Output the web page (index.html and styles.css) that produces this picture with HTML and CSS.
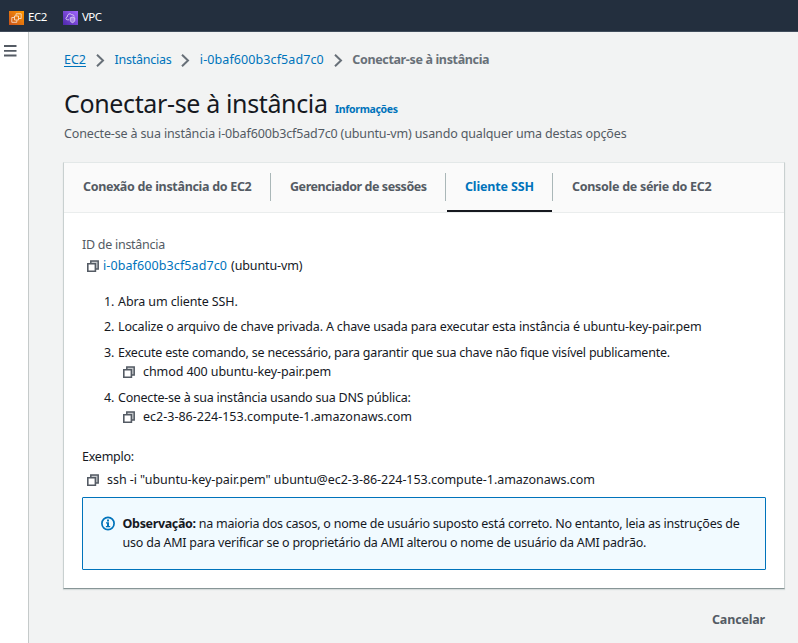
FILE: index.html
```html
<!DOCTYPE html>
<html lang="pt-BR">
<head>
<meta charset="utf-8">
<title>Conectar-se à instância</title>
<link rel="stylesheet" href="styles.css">
</head>
<body>
<svg width="0" height="0" class="defs">
  <symbol id="copy" viewBox="0 0 12 12"><path d="M3.800 3.500V.9H11.200v8H8.500" fill="#c8cbce" stroke="#545b64" stroke-width="1.500"/><path d="M.8 3.800h7.600v7.400H.8z" fill="#fff" stroke="#545b64" stroke-width="1.600"/></symbol>
  <symbol id="chevron" viewBox="0 0 9 13"><path d="M1 .7l6 5.800L1 12.300" fill="none" stroke="#687078" stroke-width="2"/></symbol>
</svg>
<header class="topbar">
  <a class="service">
    <svg width="15" height="14" viewBox="0 0 15 14"><defs><linearGradient id="og" x1="0" y1="1" x2="1" y2="0"><stop stop-color="#c8511b"/><stop offset="1" stop-color="#ff9900"/></linearGradient></defs><path fill="url(#og)" d="M0 0h15v14H0z"/><path d="M5.500 5h4v4h-4zM7 4.800V2.800h5.200v4.700H9.800M5.200 6.500H2.800V11.300h5V9.300" fill="none" stroke="#fff" stroke-opacity=".75" stroke-width=".9"/></svg>
    EC2</a>
  <a class="service">
    <svg width="15" height="14" viewBox="0 0 15 14"><defs><linearGradient id="vg" x1="0" y1="1" x2="1" y2="0"><stop stop-color="#4d27aa"/><stop offset="1" stop-color="#a166ff"/></linearGradient></defs><path fill="url(#vg)" d="M0 0h15v14H0z"/><path d="M6 8.800H4.500C2.500 8.800 2.500 6.400 4.200 6 4.200 3 7.200 1.800 8.800 3.800 10.800 3.400 11 4.800 11.200 5.600" fill="none" stroke="#fff" stroke-opacity=".75" stroke-width=".9"/><path d="M7.200 6.800l2.300-.8 2.300.8v2.500c0 1.200-1 1.800-2.300 2.400-1.300-.6-2.300-1.200-2.300-2.400z" fill="#fff" fill-opacity=".35" stroke="#fff" stroke-opacity=".7" stroke-width=".8"/></svg>
    VPC</a>
</header>
<div class="shell">
  <aside class="rail"><svg width="13" height="12" viewBox="0 0 13 12"><path d="M0 1h12.500M0 5.800h12.500M0 10.500h12.500" stroke="#545b64" stroke-width="1.800"/></svg></aside>
  <main class="main">
    <nav class="crumbs">
      <a class="under">EC2</a><svg class="chev"><use href="#chevron"/></svg>
      <a class="ls-24">Instâncias</a><svg class="chev"><use href="#chevron"/></svg>
      <a class="code">i-0baf600b3cf5ad7c0</a><svg class="chev"><use href="#chevron"/></svg>
      <span class="current">Conectar-se à instância</span>
    </nav>
    <div class="heading"><h1>Conectar-se à instância</h1><a class="info-link">Informações</a></div>
    <p class="subtitle">Conecte-se à sua instância i-0baf600b3cf5ad7c0 (ubuntu-vm) usando qualquer uma destas opções</p>
    <section class="panel">
      <div class="tabs">
        <div class="tab tab-connect"><span>Conexão de instância do EC2</span></div>
        <div class="tab tab-session"><span>Gerenciador de sessões</span></div>
        <div class="tab tab-ssh active"><span>Cliente SSH</span></div>
        <div class="tab tab-serial"><span>Console de série do EC2</span></div>
      </div>
      <div class="content">
        <div class="label">ID de instância</div>
        <div class="instance"><svg class="copy"><use href="#copy"/></svg><a class="code">i-0baf600b3cf5ad7c0</a><span class="ls-12">(ubuntu-vm)</span></div>
        <ol class="steps">
          <li class="step"><span class="num">1.</span><span class="ls-11">Abra um cliente SSH.</span></li>
          <li class="step"><span class="num">2.</span><span class="ls-17">Localize o arquivo de chave privada. A chave usada para executar esta instância é ubuntu-key-pair.pem</span></li>
          <li class="step"><span class="num">3.</span><div><span class="ls-22">Execute este comando, se necessário, para garantir que sua chave não fique visível publicamente.</span>
            <div class="command"><svg class="copy"><use href="#copy"/></svg><span class="ls-08">chmod 400 ubuntu-key-pair.pem</span></div></div></li>
          <li class="step"><span class="num">4.</span><div><span class="ls-22">Conecte-se à sua instância usando sua DNS pública:</span>
            <div class="command"><svg class="copy"><use href="#copy"/></svg><span>ec2-3-86-224-153.compute-1.amazonaws.com</span></div></div></li>
        </ol>
        <div class="example ls-24">Exemplo:</div>
        <div class="example-command"><svg class="copy"><use href="#copy"/></svg><span class="ls-05">ssh -i "ubuntu-key-pair.pem" ubuntu@ec2-3-86-224-153.compute-1.amazonaws.com</span></div>
        <div class="alert">
          <svg width="14" height="15" viewBox="0 0 14 15"><circle cx="7" cy="7.500" r="6.100" fill="none" stroke="#0073bb" stroke-width="1.700"/><path d="M6 3.600h2v1.800H6zM5 6.300h3v3.700h1.200v1.200H4.900V10H6V7.500H5z" fill="#0073bb"/></svg>
          <p><b>Observação:</b> na maioria dos casos, o nome de usuário suposto está correto. No entanto, leia as instruções de<br>uso da AMI para verificar se o proprietário da AMI alterou o nome de usuário da AMI padrão.</p>
        </div>
      </div>
    </section>
    <div class="actions"><a class="cancel">Cancelar</a></div>
  </main>
</div>
</body>
</html>
```
FILE: styles.css
```css
* { box-sizing: border-box; }
html, body { height: 100%; }
body { margin: 0; display: flex; flex-direction: column; overflow: hidden; background: #f2f3f3; color: #16191f; font: 12.5px/19px "Noto Sans", sans-serif; white-space: nowrap; }
svg { display: block; flex: none; }
.defs { position: absolute; }
a { color: #0073bb; }
p, h1, ol { margin: 0; padding: 0; font-weight: 400; }
.topbar { height: 32px; flex: none; display: flex; gap: 16px; padding: 7px 0 0 9px; background: #232f3e; border-bottom: 1px solid #414d5c; }
.service { display: flex; align-items: center; gap: 4px; height: 19px; color: #fff; font-size: 11.5px; letter-spacing: -0.45px; }
.service svg { margin-top: 3px; }
.shell { flex: 1; display: flex; }
.rail { width: 29px; background: #fff; border-right: 1px solid #c5caca; padding: 13px 0 0 4px; }
.main { flex: 1; padding: 18px 13px 0 35px; }
.crumbs { display: flex; align-items: center; height: 19px; }
.chev { width: 9px; height: 13px; margin: 1px 9.4px 0 10px; }
.under { text-decoration: underline; text-underline-offset: 2px; }
.current { font-weight: 700; color: #687078; letter-spacing: -0.35px; }
.code { letter-spacing: 0.1px; }
.heading { display: flex; align-items: baseline; height: 36px; margin-top: 16px; }
h1 { font-size: 25px; line-height: 36px; letter-spacing: -0.36px; }
.info-link { margin-left: 7.5px; font-size: 10.5px; font-weight: 700; letter-spacing: -0.33px; }
.subtitle { margin-top: 3px; color: #545b64; letter-spacing: -0.145px; }
.panel { margin-top: 19px; height: 427px; background: #fff; border: 1px solid #c9d0d0; border-top-color: #e3e8e8; border-bottom-color: #879596; margin-left: -1px; box-shadow: 0 1px 1px #d5dbdb; }
.tabs { display: flex; height: 50px; background: #fafafa; border-bottom: 1px solid #eaeded; padding-top: 10px; color: #545b64; font-weight: 700; }
.tab { height: 28px; line-height: 28px; padding-left: 19px; border-right: 1px solid #aab7b8; }
.tab-connect { width: 207px; letter-spacing: -0.31px; }
.tab-session { width: 175px; letter-spacing: -0.43px; }
.tab-ssh { width: 107px; letter-spacing: -0.16px; }
.tab-serial { letter-spacing: -0.29px; border: 0; }
.active { color: #0073bb; }
.active::after { content: ""; display: block; width: 105px; height: 2px; margin: 9px 0 0 -18px; background: #16191f; }
.content { padding: 22px 18px 0; }
.label { color: #545b64; letter-spacing: -0.27px; }
.instance { display: flex; align-items: center; margin-top: 2px; padding-left: 5px; gap: 4px; }
.copy { width: 12px; height: 12px; margin-top: 1px; }
.steps { list-style: none; margin: 17px 0 0 22px; }
.step { display: flex; margin-bottom: 7px; }
.step:first-child { margin-bottom: 6px; }
.num { width: 14px; letter-spacing: -0.1px; }
.command { display: flex; align-items: center; gap: 8px; padding-left: 5px; }
.example { margin-top: 21px; }
.example-command { display: flex; align-items: center; gap: 8px; padding-left: 5px; margin-top: 4px; }
.alert { display: flex; gap: 8px; height: 73px; margin-top: 8px; padding: 16px 17.600px; border: 1px solid #0073bb; background: #f1faff; border-radius: 1px; letter-spacing: -0.232px; }
.alert svg { margin-top: 2px; }
.alert b { letter-spacing: -0.36px; }
.actions { display: flex; justify-content: flex-end; margin-top: 21px; padding-right: 20px; }
.cancel { color: #545b64; font-weight: 700; letter-spacing: -0.17px; }
.ls-05 { letter-spacing: -0.05px; }
.ls-08 { letter-spacing: -0.08px; }
.ls-11 { letter-spacing: -0.11px; }
.ls-12 { letter-spacing: -0.12px; }
.ls-17 { letter-spacing: -0.175px; }
.ls-22 { letter-spacing: -0.22px; }
.ls-24 { letter-spacing: -0.24px; }
```
